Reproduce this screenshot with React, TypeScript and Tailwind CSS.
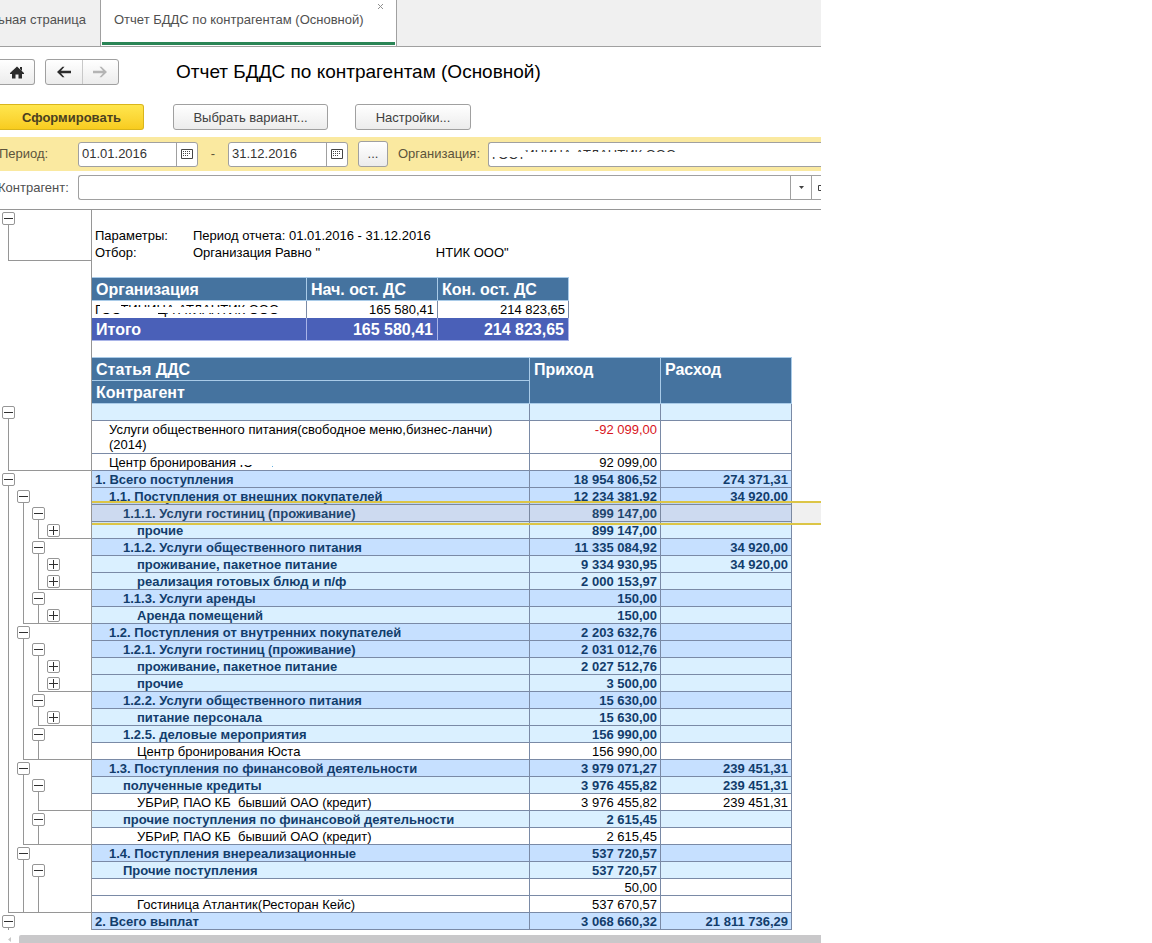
import { ReactNode } from "react";

type Row = {
  // one character per tree level: "-" / "+" toggle, "|" line, "L" end of group
  tree: string;
  level: number;
  kind: "group" | "sub" | "item" | "selected";
  name: ReactNode;
  income?: string;
  expense?: string;
  tall?: boolean;
};

const rows: Row[] = [
  { tree: "-   ", level: 0, kind: "sub", name: "" },
  { tree: "|   ", level: 1, kind: "item", name: <>Услуги общественного питания(свободное меню,бизнес-ланчи)<br />(2014)</>, income: "-92 099,00", tall: true },
  { tree: "L   ", level: 1, kind: "item", name: <>Центр бронирования <Hidden text="Юста" /></>, income: "92 099,00" },
  { tree: "-   ", level: 0, kind: "group", name: "1. Всего поступления", income: "18 954 806,52", expense: "274 371,31" },
  { tree: "|-  ", level: 1, kind: "group", name: "1.1. Поступления от внешних покупателей", income: "12 234 381,92", expense: "34 920,00" },
  { tree: "||- ", level: 2, kind: "selected", name: "1.1.1. Услуги гостиниц (проживание)", income: "899 147,00" },
  { tree: "||L+", level: 3, kind: "sub", name: "прочие", income: "899 147,00" },
  { tree: "||- ", level: 2, kind: "group", name: "1.1.2. Услуги общественного питания", income: "11 335 084,92", expense: "34 920,00" },
  { tree: "|||+", level: 3, kind: "sub", name: "проживание, пакетное питание", income: "9 334 930,95", expense: "34 920,00" },
  { tree: "||L+", level: 3, kind: "sub", name: "реализация готовых блюд и п/ф", income: "2 000 153,97" },
  { tree: "||- ", level: 2, kind: "group", name: "1.1.3. Услуги аренды", income: "150,00" },
  { tree: "|L|+", level: 3, kind: "sub", name: "Аренда помещений", income: "150,00" },
  { tree: "|-  ", level: 1, kind: "group", name: "1.2. Поступления от внутренних покупателей", income: "2 203 632,76" },
  { tree: "||- ", level: 2, kind: "group", name: "1.2.1. Услуги гостиниц (проживание)", income: "2 031 012,76" },
  { tree: "|||+", level: 3, kind: "sub", name: "проживание, пакетное питание", income: "2 027 512,76" },
  { tree: "||L+", level: 3, kind: "sub", name: "прочие", income: "3 500,00" },
  { tree: "||- ", level: 2, kind: "group", name: "1.2.2. Услуги общественного питания", income: "15 630,00" },
  { tree: "||L+", level: 3, kind: "sub", name: "питание персонала", income: "15 630,00" },
  { tree: "||- ", level: 2, kind: "sub", name: "1.2.5. деловые мероприятия", income: "156 990,00" },
  { tree: "|L| ", level: 3, kind: "item", name: "Центр бронирования Юста", income: "156 990,00" },
  { tree: "|-  ", level: 1, kind: "group", name: "1.3. Поступления по финансовой деятельности", income: "3 979 071,27", expense: "239 451,31" },
  { tree: "||- ", level: 2, kind: "sub", name: "полученные кредиты", income: "3 976 455,82", expense: "239 451,31" },
  { tree: "||L ", level: 3, kind: "item", name: "УБРиР, ПАО КБ  бывший ОАО (кредит)", income: "3 976 455,82", expense: "239 451,31" },
  { tree: "||- ", level: 2, kind: "sub", name: "прочие поступления по финансовой деятельности", income: "2 615,45" },
  { tree: "|L| ", level: 3, kind: "item", name: "УБРиР, ПАО КБ  бывший ОАО (кредит)", income: "2 615,45" },
  { tree: "|-  ", level: 1, kind: "group", name: "1.4. Поступления внереализационные", income: "537 720,57" },
  { tree: "||- ", level: 2, kind: "sub", name: "Прочие поступления", income: "537 720,57" },
  { tree: "||| ", level: 3, kind: "item", name: "", income: "50,00" },
  { tree: "L|| ", level: 3, kind: "item", name: "Гостиница Атлантик(Ресторан Кейс)", income: "537 670,57" },
  { tree: "-   ", level: 0, kind: "group", name: "2. Всего выплат", income: "3 068 660,32", expense: "21 811 736,29" },
];

const kindClass = {
  group: "bg-[#c6e0ff] font-bold text-[#123d6c]",
  selected: "bg-[#d8e6ff] font-bold text-[#123d6c]",
  sub: "bg-[#daf0ff] font-bold text-[#123d6c]",
  item: "bg-white text-black",
};

const indentClass = ["pl-[3px]", "pl-[17px]", "pl-[31px]", "pl-[45px]"];

const buttonClass =
  "h-[26px] rounded-[3px] border border-[#a0a0a0] bg-linear-to-b from-white to-[#ececec] text-[#404040]";

function Hidden({ text }: { text: string }) {
  return (
    <span className="relative inline-block">
      {text}
      <span className="absolute inset-x-0 top-0 h-[10px] bg-white" />
      <span className="absolute top-0 right-0 h-full w-[19px] bg-white" />
    </span>
  );
}

function Toggle({ open }: { open: boolean }) {
  return (
    <button
      aria-label={open ? "Свернуть" : "Развернуть"}
      className="flex size-[13px] shrink-0 items-center justify-center rounded-[2px] border border-[#969696] bg-white"
    >
      <svg className="size-[9px]" viewBox="0 0 9 9" stroke="#303030" fill="none">
        <path d={open ? "M0 4.5h9" : "M0 4.5h9M4.5 0v9"} />
      </svg>
    </button>
  );
}

function Tree({ tree, heightClass }: { tree: string; heightClass: string }) {
  const end = tree.indexOf("L");
  return (
    <div className={`flex pl-px ${heightClass}`}>
      {tree.split("").map((c, i) => {
        const under = end >= 0 && i > end ? "border-b border-[#969696]" : "";
        if (c === "-" || c === "+") {
          return (
            <div key={i} className={`flex w-[15px] flex-col items-center pt-[2px] ${under}`}>
              <Toggle open={c === "-"} />
              {c === "-" && <span className="w-px flex-1 bg-[#969696]" />}
            </div>
          );
        }
        return (
          <div key={i} className={`flex w-[15px] pl-[7px] ${under}`}>
            {c === "|" && <span className="w-px bg-[#969696]" />}
            {c === "L" && <span className="flex-1 border-b border-l border-[#969696]" />}
          </div>
        );
      })}
      <div className={end >= 0 ? "flex-1 border-b border-[#969696]" : "flex-1"} />
    </div>
  );
}

function CalendarIcon() {
  return (
    <svg width="12" height="11" viewBox="0 0 12 11" fill="none" stroke="#454545">
      <path d="M.5.5h11v9H.5z" />
      <path d="M2 2.500h8M2 4.500h8M2 6.500h6" strokeDasharray="1 1" />
    </svg>
  );
}

function DateField({ label, value }: { label: string; value: string }) {
  return (
    <div className="flex h-[25px] w-[120px] rounded-[3px] border border-[#a0a0a0] bg-white">
      <input aria-label={label} defaultValue={value} className="min-w-0 flex-1 px-[3px] text-[#333] outline-none" />
      <button aria-label="Календарь" className="flex w-[21px] items-center justify-center border-l border-[#a0a0a0]">
        <CalendarIcon />
      </button>
    </div>
  );
}

function Tabs() {
  return (
    <nav className="flex h-[47px] border-b border-[#a0a0a0] bg-[#f0f0f0] text-[#505050]">
      <a href="#home" className="flex w-[100px] items-center justify-end overflow-hidden pr-[14px] pb-[6px] whitespace-nowrap">
        Начальная страница
      </a>
      <div className="relative w-[297px] border-x border-[#a0a0a0] bg-white px-px">
        <a href="#report" className="flex h-[45px] items-center border-b-[3px] border-[#2a8556] pb-[2px] pl-[12px] whitespace-nowrap">
          Отчет БДДС по контрагентам (Основной)
        </a>
        <button aria-label="Закрыть" className="absolute top-[4px] right-[13px]">
          <svg width="5" height="5" viewBox="0 0 5 5" stroke="#909090">
            <path d="M0 0l5 5M5 0L0 5" />
          </svg>
        </button>
      </div>
    </nav>
  );
}

function Toolbar() {
  return (
    <>
      <div className="flex items-center pt-[12px]">
        <button aria-label="Домой" className={`${buttonClass} flex w-[35px] items-center justify-center rounded-l-none border-l-0`}>
          <svg width="16" height="13" viewBox="0 0 16 13" fill="#2b2b2b">
            <path d="M8 .5L15 7v1h-2v4.500H9.500V8.500h-3v4H3V8H1V7z" />
            <path d="M11 1h2v4l-2-2z" />
          </svg>
        </button>
        <div className={`${buttonClass} ml-[10px] flex w-[74px]`}>
          <button aria-label="Назад" className="flex flex-1 items-center justify-center border-r border-[#c8c8c8]">
            <svg width="14" height="12" viewBox="0 0 14 12" fill="#2b2b2b">
              <path d="M0 6L5.500.8h2L4 4.800h10v2.400H4l3.500 4h-2z" />
            </svg>
          </button>
          <button aria-label="Вперед" className="flex flex-1 items-center justify-center">
            <svg width="14" height="12" viewBox="0 0 14 12" fill="#b4b4b4">
              <path d="M14 6L8.500.8h-2l3.500 4H0v2.400h10l-3.500 4h2z" />
            </svg>
          </button>
        </div>
        <h1 className="ml-[57px] text-[19px] leading-6 whitespace-nowrap text-black">Отчет БДДС по контрагентам (Основной)</h1>
      </div>
      <div className="flex pt-[19px] pb-[7px]">
        <button className="h-[26px] w-[144px] rounded-r-[3px] border border-l-0 border-[#d9b51c] bg-linear-to-b from-[#ffe64d] to-[#f8cc1d] pt-px font-bold text-[#4a4020]">
          Сформировать
        </button>
        <button className={`${buttonClass} ml-[29px] w-[155px] pt-px`}>Выбрать вариант...</button>
        <button className={`${buttonClass} ml-[27px] w-[116px] pt-px`}>Настройки...</button>
      </div>
    </>
  );
}

function Filters() {
  return (
    <>
      <div className="flex h-[34px] items-center bg-[#fae9a0] text-[#5c543c]">
        <span className="-ml-px w-[79px]">Период:</span>
        <DateField label="Начало периода" value="01.01.2016" />
        <span className="w-[30px] text-center">-</span>
        <DateField label="Конец периода" value="31.12.2016" />
        <button className={`${buttonClass} mx-[10px] w-[30px]`}>...</button>
        <label htmlFor="org" className="w-[90px]">Организация:</label>
        <div className="relative h-[25px] min-w-0 flex-1 rounded-l-[3px] border border-r-0 border-[#a0a0a0] bg-white">
          <input id="org" defaultValue="ГОСТИНИЦА АТЛАНТИК ООО" className="h-full w-full px-[3px] text-[#333] outline-none" />
          <span className="absolute top-[2px] left-[2px] h-[12px] w-[34px] bg-white" />
          <span className="absolute top-[9px] left-[36px] h-[12px] w-[160px] bg-white" />
        </div>
      </div>
      <div className="flex items-center pt-[4px] pb-[9px] text-[#505050]">
        <label htmlFor="partner" className="-ml-[2px] w-[80px]">Контрагент:</label>
        <div className="flex h-[25px] min-w-0 flex-1 overflow-hidden rounded-l-[3px] border border-r-0 border-[#a0a0a0] bg-white">
          <input id="partner" className="min-w-0 flex-1 px-[3px] outline-none" />
          <button aria-label="Выбрать" className="flex w-[22px] items-center justify-center border-x border-[#a0a0a0]">
            <svg width="5" height="3" viewBox="0 0 5 3" fill="#404040">
              <path d="M0 0h5L2.500 3z" />
            </svg>
          </button>
          <button aria-label="Открыть" className="flex w-[9px] items-center justify-end">
            <svg width="3" height="6" viewBox="0 0 3 6" fill="none" stroke="#404040">
              <path d="M3 .5H.5v5H3" />
            </svg>
          </button>
        </div>
      </div>
    </>
  );
}

function Summary() {
  const head = "h-[23px] border-r border-b border-[#a9cbe8] bg-[#45739f] px-[4px] pt-px text-left";
  const total = "h-[23px] border-r border-b border-[#a9b4e8] bg-[#4a60b8] px-[4px] pt-px";
  return (
    <table className="my-4 w-[477px] table-fixed border-separate border-spacing-0 border-t border-[#a9cbe8]">
      <colgroup>
        <col className="w-[215px]" />
        <col className="w-[131px]" />
        <col className="w-[131px]" />
      </colgroup>
      <thead className="text-[16px] leading-[21px] text-white">
        <tr>
          <th className={head}>Организация</th>
          <th className={head}>Нач. ост. ДС</th>
          <th className={head}>Кон. ост. ДС</th>
        </tr>
      </thead>
      <tbody className="text-black">
        <tr>
          <td className="h-[17px] border-r border-[#7a8aa6] pl-[3px]">
            <div className="relative leading-4">
              ГОСТИНИЦА АТЛАНТИК ООО
              <span className="absolute top-[5px] left-[5px] h-[6px] w-[190px] bg-white" />
              <span className="absolute top-0 left-[5px] h-[8px] w-[21px] bg-white" />
              <span className="absolute top-[10px] left-[27px] h-[4px] w-[36px] bg-white" />
            </div>
          </td>
          <td className="border-r border-[#7a8aa6] pr-[3px] text-right leading-4">165 580,41</td>
          <td className="border-r border-[#7a8aa6] pr-[3px] text-right leading-4">214 823,65</td>
        </tr>
        <tr className="text-[16px] leading-[21px] font-bold text-white">
          <td className={total}>Итого</td>
          <td className={`${total} text-right`}>165 580,41</td>
          <td className={`${total} text-right`}>214 823,65</td>
        </tr>
      </tbody>
    </table>
  );
}

function Report() {
  const head = "border-r border-b border-[#a9cbe8] bg-[#45739f] px-[4px] pt-px text-left align-top";
  const cell = "border-r border-b border-[#7a8aa6] pt-px align-top";
  return (
    <div className="border-t border-[#969696]">
      <div className="flex">
        <div className="w-[92px] shrink-0 border-r border-[#969696]">
          <Tree tree="-   " heightClass="h-[17px]" />
          <Tree tree="L   " heightClass="h-[34px]" />
        </div>
        <div className="min-w-0 flex-1 pt-[17px] text-black">
          <dl className="grid grid-cols-[98px_1fr] pl-[3px] leading-[17px]">
            <dt>Параметры:</dt>
            <dd>Период отчета: 01.01.2016 - 31.12.2016</dd>
            <dt>Отбор:</dt>
            <dd className="whitespace-nowrap">
              Организация Равно "
              <span className="relative">
                ГОСТИНИЦА АТЛА
                <span className="absolute inset-0 bg-white" />
              </span>
              НТИК ООО"
            </dd>
          </dl>
          <Summary />
        </div>
      </div>
      <table className="w-full table-fixed border-separate border-spacing-0">
        <colgroup>
          <col className="w-[92px]" />
          <col className="w-[438px]" />
          <col className="w-[131px]" />
          <col className="w-[131px]" />
          <col />
        </colgroup>
        <thead className="text-[16px] leading-[21px] text-white">
          <tr>
            <td rowSpan={2} className="border-r border-[#969696]" />
            <th className={`${head} h-[24px] border-t`}>Статья ДДС</th>
            <th rowSpan={2} className={`${head} border-t`}>Приход</th>
            <th rowSpan={2} className={`${head} border-t`}>Расход</th>
          </tr>
          <tr>
            <th className={`${head} h-[23px]`}>Контрагент</th>
          </tr>
        </thead>
        <tbody className="leading-[15px]">
          {rows.map((row, i) => (
            <tr key={i} className={row.kind === "selected" ? "relative" : ""}>
              <td className="border-r border-[#969696] p-0">
                <Tree tree={row.tree} heightClass={row.tall ? "h-[33px]" : "h-[17px]"} />
              </td>
              <td className={`${cell} ${kindClass[row.kind]} ${indentClass[row.level]} whitespace-pre`}>{row.name}</td>
              <td className={`${cell} ${kindClass[row.kind]} pr-[3px] text-right`}>
                {row.income?.startsWith("-") ? <span className="text-[#d8141c]">{row.income}</span> : row.income}
              </td>
              <td className={`${cell} ${kindClass[row.kind]} pr-[3px] text-right`}>{row.expense}</td>
              <td className="p-0">
                {row.kind === "selected" && (
                  <div className="pointer-events-none absolute -top-[4px] right-0 left-[92px] h-[24px] border-y-2 border-[#dcc546] bg-[#808080]/12" />
                )}
              </td>
            </tr>
          ))}
        </tbody>
      </table>
      <div className="flex h-[13px] items-end">
        <span className="flex h-[8px] w-[19px] items-center justify-center">
          <svg width="3" height="5" viewBox="0 0 3 5" fill="#c8c8c8">
            <path d="M3 0v5L0 2.500z" />
          </svg>
        </span>
        <div className="h-[8px] flex-1 rounded-tl-[2px] bg-[#c9c8ca]" />
      </div>
    </div>
  );
}

export default function App() {
  return (
    <div className="min-h-screen bg-white font-['Liberation_Sans',Arial,sans-serif] text-[13px] leading-4">
      <main className="w-full max-w-[821px] overflow-hidden">
        <Tabs />
        <Toolbar />
        <Filters />
        <Report />
      </main>
    </div>
  );
}
